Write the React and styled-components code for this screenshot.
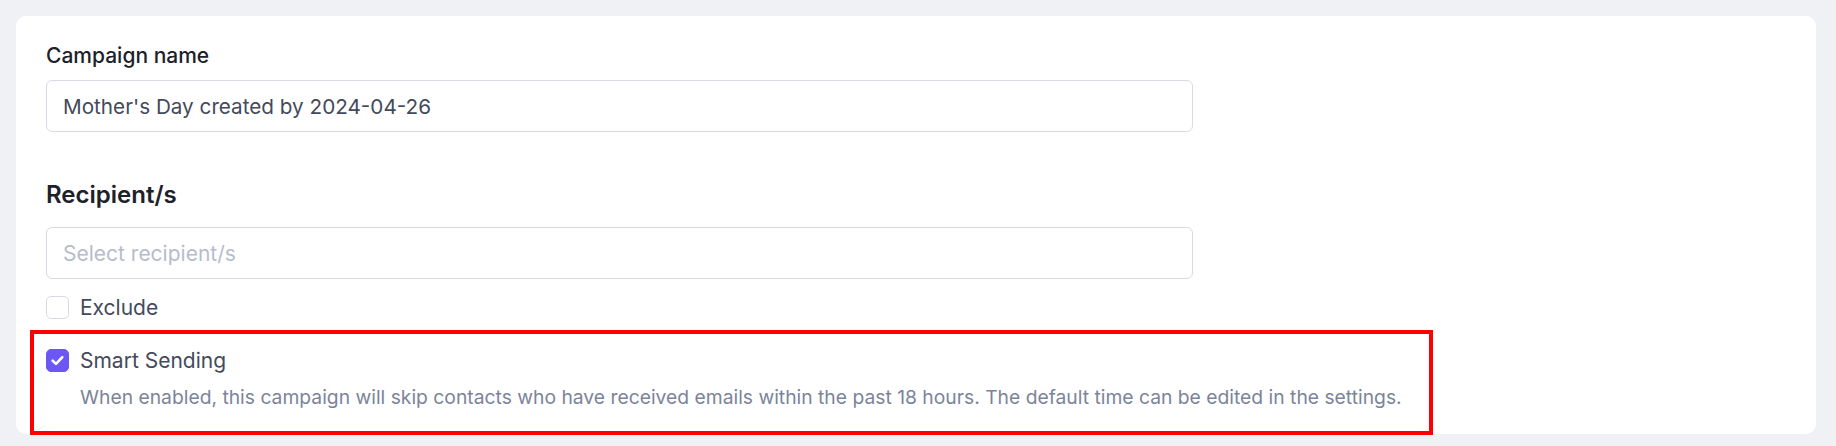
import React from "react";
import styled, { createGlobalStyle } from "styled-components";

const GlobalStyle = createGlobalStyle`
  * { box-sizing: border-box; }
  html, body { margin: 0; padding: 0; background: #f0f1f5; }
  body {
    font-family: Inter, "Liberation Sans", "Noto Sans", sans-serif;
    -webkit-font-smoothing: antialiased;
  }
`;

const Page = styled.div`
  padding: 16px 20px 12px 16px;
  background: #f0f1f5;
`;

const Card = styled.section`
  position: relative;
  background: #ffffff;
  border-radius: 10px;
  padding: 28px 30px 24px 30px;
  min-height: 418px;
`;

const FieldLabel = styled.div`
  font-size: 21px;
  line-height: 24px;
  font-weight: 500;
  color: #1d2129;
  margin-bottom: 12px;
`;

const SectionTitle = styled.h2`
  margin: 49px 0 18px 0;
  font-size: 24px;
  line-height: 28px;
  font-weight: 600;
  color: #1d2129;
`;

const InputBox = styled.div`
  width: 1147px;
  height: 52px;
  border: 1px solid #d8dbe7;
  border-radius: 6px;
  display: flex;
  align-items: center;
  padding: 0 16px;
  font-size: ${(p) => (p.$placeholder ? 21 : 20.7)}px;
  color: ${(p) => (p.$placeholder ? "#b7bccb" : "#434a5b")};
`;

const CheckRow = styled.label`
  display: flex;
  align-items: center;
  gap: 11px;
  height: 23px;
  margin-top: ${(p) => p.$top}px;
  font-size: 21px;
  color: #434a5b;
`;

const Box = styled.span`
  width: 23px;
  height: 23px;
  flex: none;
  border-radius: 5px;
  display: flex;
  align-items: center;
  justify-content: center;
  background: ${(p) => (p.$checked ? "#6c57f5" : "#ffffff")};
  border: 1px solid ${(p) => (p.$checked ? "#6c57f5" : "#d8dbe7")};
`;

const SmartBlock = styled.div`
  position: relative;
`;

const Description = styled.p`
  margin: 13px 0 0 34px;
  font-size: 19.3px;
  line-height: 24px;
  color: #7b849a;
`;

const Annotation = styled.div`
  position: absolute;
  left: -16px;
  top: -19px;
  width: 1403px;
  height: 105px;
  border: 4px solid #ff0000;
  pointer-events: none;
`;

function Checkbox({ checked }) {
  return (
    <Box $checked={checked}>
      {checked && (
        <svg width="15" height="15" viewBox="0 0 14 14" fill="none">
          <path
            d="M2.5 7.2 L5.6 10.2 L11.5 3.8"
            stroke="#ffffff"
            strokeWidth="2.4"
            strokeLinecap="round"
            strokeLinejoin="round"
          />
        </svg>
      )}
    </Box>
  );
}

export default function App() {
  return (
    <>
      <GlobalStyle />
      <Page>
        <Card>
          <FieldLabel>Campaign name</FieldLabel>
          <InputBox>Mother's Day created by 2024-04-26</InputBox>
          <SectionTitle>Recipient/s</SectionTitle>
          <InputBox $placeholder>Select recipient/s</InputBox>
          <CheckRow $top={17}>
            <Checkbox />
            Exclude
          </CheckRow>
          <SmartBlock>
            <CheckRow $top={30}>
              <Checkbox checked />
              Smart Sending
            </CheckRow>
            <Description>
              When enabled, this campaign will skip contacts who have received
              emails within the past 18 hours. The default time can be edited in
              the settings.
            </Description>
            <Annotation />
          </SmartBlock>
        </Card>
      </Page>
    </>
  );
}
